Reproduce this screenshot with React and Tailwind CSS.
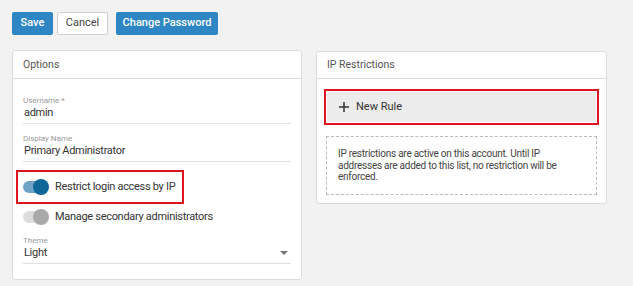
import React from 'react';

const Toggle = ({ on }) => (
  <span className="relative inline-flex items-center w-[26px] h-4 shrink-0">
    <span className={`block w-[24px] h-[12px] rounded-full ${on ? 'bg-[#6fa3c6]' : 'bg-[#dcdcdc]'}`} />
    <span className={`absolute right-0 top-0 w-4 h-4 rounded-full ${on ? 'bg-[#0e6798]' : 'bg-[#a9a9a9]'}`} />
  </span>
);

const Field = ({ label, value, caret }) => (
  <div className="border-b border-[#e0e0e0] pb-[3px]">
    <div className="text-[8px] leading-[10px] text-[#999]">{label}</div>
    <div className="flex items-center justify-between text-[11px] leading-[14px] text-[#333] pl-px tracking-[-0.3px]">
      <span>{value}</span>
      {caret && (
        <span className="mr-[3px] w-0 h-0 border-l-[4px] border-r-[4px] border-t-[4px] border-l-transparent border-r-transparent border-t-[#777]" />
      )}
    </div>
  </div>
);

export default function App() {
  return (
    <div className="w-[633px] h-[286px] bg-[#f2f2f2] font-['Roboto',sans-serif] pt-3 pl-3">
      <div className="flex items-center h-[23px]">
        <button className="h-[23px] w-[41px] bg-[#2e86c4] text-white text-[11px] font-medium rounded-[2px]">Save</button>
        <button className="h-[23px] ml-1 w-[51px] bg-white border border-[#cfcfcf] text-[#444] text-[11px] rounded-[2px]">Cancel</button>
        <button className="h-[23px] ml-2 w-[102px] bg-[#2e86c4] text-white text-[11px] font-medium rounded-[2px]">Change Password</button>
      </div>

      <div className="flex items-start mt-[15px]">
        <div className="w-[290px] h-[230px] bg-white border border-[#dcdcdc] rounded-[3px]">
          <div className="h-[28px] flex items-center px-[10px] text-[10.5px] text-[#555] border-b border-[#dcdcdc]">Options</div>
          <div className="px-[10px] pt-[17px]">
            <Field label="Username *" value="admin" />
            <div className="mt-[10px]">
              <Field label="Display Name" value="Primary Administrator" />
            </div>
            <div className="-ml-[7px] mt-[8px] w-[168px] h-[34px] border-2 border-[#e0141e] flex items-center pl-[5px] gap-[6px]">
              <Toggle on />
              <span className="text-[11px] text-[#333] tracking-[-0.3px]">Restrict login access by IP</span>
            </div>
            <div className="flex items-center gap-[6px] mt-[5px]">
              <Toggle />
              <span className="text-[11px] text-[#333] tracking-[-0.3px]">Manage secondary administrators</span>
            </div>
            <div className="mt-[10px]">
              <Field label="Theme" value="Light" caret />
            </div>
          </div>
        </div>

        <div className="ml-[14px] mt-px w-[291px] h-[153px] bg-white border border-[#dcdcdc] rounded-[3px]">
          <div className="h-[27px] flex items-center px-[10px] text-[10.5px] text-[#555] border-b border-[#dcdcdc]">IP Restrictions</div>
          <div className="px-[7px] pt-[10px]">
            <div className="h-[36px] border-2 border-[#e0141e] p-px">
              <div className="h-full bg-[#ececec] flex items-center pl-[12px] gap-[7px] text-[11px] text-[#333]">
                <svg width="10" height="10" viewBox="0 0 10 10"><path d="M5 0v10M0 5h10" stroke="#333" strokeWidth="1.5" /></svg>
                <span>New Rule</span>
              </div>
            </div>
            <div className="mt-[11px] mx-[2px] h-[59px] border border-dashed border-[#bbb] pl-[11px] pr-[20px] pt-[11px] text-[10px] leading-[11.5px] text-[#444] tracking-[-0.25px]">
              IP restrictions are active on this account. Until IP addresses are added to this list, no restriction will be enforced.
            </div>
          </div>
        </div>
      </div>
    </div>
  );
}
